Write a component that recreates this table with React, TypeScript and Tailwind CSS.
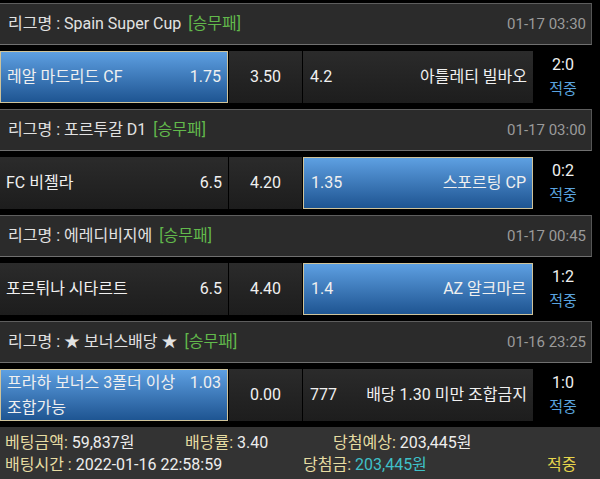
import React from "react";

type Match = {
  league: React.ReactNode;
  date: string;
  home: React.ReactNode;
  homeOdd: string;
  draw: string;
  awayOdd: string;
  away: string;
  score: string;
  pick: "home" | "away";
  twoLine?: boolean;
};

const matches: Match[] = [
  { league: "Spain Super Cup", date: "01-17 03:30", home: "레알 마드리드 CF", homeOdd: "1.75", draw: "3.50", awayOdd: "4.2", away: "아틀레티 빌바오", score: "2:0", pick: "home" },
  { league: "포르투갈 D1", date: "01-17 03:00", home: "FC 비젤라", homeOdd: "6.5", draw: "4.20", awayOdd: "1.35", away: "스포르팅 CP", score: "0:2", pick: "away" },
  { league: "에레디비지에", date: "01-17 00:45", home: "포르튀나 시타르트", homeOdd: "6.5", draw: "4.40", awayOdd: "1.4", away: "AZ 알크마르", score: "1:2", pick: "away" },
  { league: "★ 보너스배당 ★", date: "01-16 23:25", home: "프라하 보너스 3폴더 이상", homeOdd: "1.03", draw: "0.00", awayOdd: "777", away: "배당 1.30 미만 조합금지", score: "1:0", pick: "home", twoLine: true },
];

const blue = "bg-gradient-to-b from-[#5ea0e2] to-[#1e5592] border border-[#cfc39a]";
const dark = "bg-gradient-to-b from-[#2b2b2b] to-[#1d1d1d]";

function Group({ m }: { m: Match }) {
  return (
    <div className="flex flex-col">
      <div className="h-[42px] w-[592px] bg-[#2b2b2b] border-t border-b border-r border-t-[#5e5e5e] border-b-[#707070] border-r-[#555] flex items-center justify-between pl-[8px] pr-[5px]">
        <div className="text-[16px] text-[#e2e2e2] whitespace-nowrap">
          리그명 : {m.league}<span className="ml-[7px] text-[#62b94c]">[승무패]</span>
        </div>
        <div className="text-[15px] text-[#9a9a9a]">{m.date}</div>
      </div>
      <div className="mt-[6px] h-[52px] flex text-[16px] text-[#f0f0f0]">
        <div className={`w-[228px] ${m.pick === "home" ? blue : dark} ${m.twoLine ? "flex flex-col pl-[6px] pr-[6px] pt-[0px] leading-[25px]" : "flex items-center justify-between pl-[6px] pr-[6px]"}`}>
          {m.twoLine ? (
            <>
              <div className="flex justify-between">
                <span>{m.home}</span>
                <span>{m.homeOdd}</span>
              </div>
              <div>조합가능</div>
            </>
          ) : (
            <>
              <span>{m.home}</span>
              <span>{m.homeOdd}</span>
            </>
          )}
        </div>
        <div className={`ml-[1px] w-[73px] ${dark} flex items-center justify-center`}>{m.draw}</div>
        <div className={`ml-[1px] w-[230px] ${m.pick === "away" ? blue : dark} flex items-center justify-between pl-[7px] pr-[6px]`}>
          <span>{m.awayOdd}</span>
          <span>{m.away}</span>
        </div>
        <div className="w-[60px] flex flex-col items-center justify-center leading-[24px]">
          <span className="text-[#f0f0f0]">{m.score}</span>
          <span className="text-[#5aa3df] text-[15px]">적중</span>
        </div>
      </div>
    </div>
  );
}

export default function App() {
  return (
    <div
      className="w-[600px] h-[479px] bg-black overflow-hidden flex flex-col pt-[3px]"
      style={{ fontFamily: "Roboto, 'Noto Sans CJK KR', sans-serif" }}
    >
      <div className="flex flex-col gap-[6px]">
        {matches.map((m, i) => (
          <Group key={i} m={m} />
        ))}
      </div>
      <div className="mt-[6px] flex-1 bg-[#333333] text-[16px] text-[#ededed] pl-[5px] pt-[5px] leading-[22px]">
        <div className="flex">
          <div className="w-[180px]"><span className="text-[#e6dca2]">베팅금액:</span> 59,837원</div>
          <div className="w-[148px]"><span className="text-[#e6dca2]">배당률:</span> 3.40</div>
          <div><span className="text-[#e6dca2]">당첨예상:</span> 203,445원</div>
        </div>
        <div className="flex">
          <div className="w-[298px]"><span className="text-[#e6dca2]">배팅시간 :</span> 2022-01-16 22:58:59</div>
          <div className="w-[244px]"><span className="text-[#e6dca2]">당첨금:</span> <span className="text-[#3fc0c8]">203,445원</span></div>
          <div className="text-[#e6d54c]">적중</div>
        </div>
      </div>
    </div>
  );
}
